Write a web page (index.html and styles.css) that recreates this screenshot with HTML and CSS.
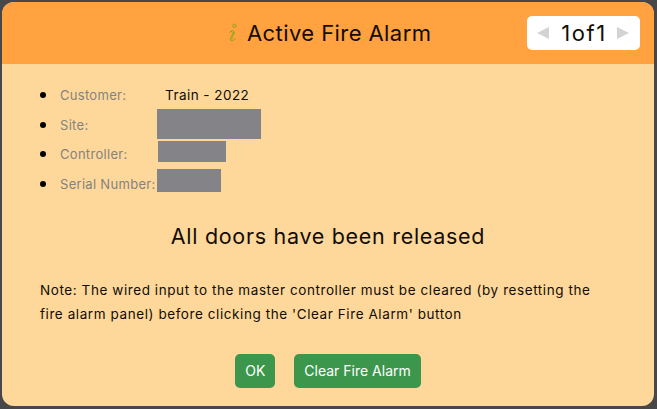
FILE: index.html
```html
<!DOCTYPE html>
<html lang="en">
<head>
  <meta charset="UTF-8">
  <meta name="viewport" content="width=device-width, initial-scale=1.0">
  <title>Active Fire Alarm</title>
  <link rel="stylesheet" href="styles.css">
</head>
<body>
  <div class="modal">
    <div class="modal-header">
      <div class="modal-title">
        <svg class="info-icon" width="12" height="20" viewBox="0 0 12 20" fill="none" stroke="#8fa51f" stroke-width="1">
          <circle cx="7.5" cy="2.8" r="1.7"/>
          <path d="M2.5 9.5 C4 7.5 6.5 7 6.6 8.5 C6.6 10.5 3 14.5 3.2 16.6 C3.4 18.6 6.8 17.6 9 15"/>
          <path d="M3.6 8.6 C5 8.2 5.2 8.6 5 9.8 M7.6 9 C7.4 11 4.6 14.6 4.6 16.4"/>
        </svg>
        <span>Active Fire Alarm</span>
      </div>
      <div class="pager">
        <span class="arrow arrow-left"></span>
        <span class="pager-text">1of1</span>
        <span class="arrow arrow-right"></span>
      </div>
    </div>
    <div class="modal-body">
      <ul class="details">
        <li><span class="label">Customer:</span><span class="value">Train - 2022</span></li>
        <li><span class="label">Site:</span><span class="redacted redacted-site"></span></li>
        <li><span class="label">Controller:</span><span class="redacted redacted-controller"></span></li>
        <li><span class="label">Serial Number:</span><span class="redacted redacted-serial"></span></li>
      </ul>
      <h2 class="status">All doors have been released</h2>
      <p class="note">Note: The wired input to the master controller must be cleared (by resetting the fire alarm panel) before clicking the 'Clear Fire Alarm' button</p>
      <div class="actions">
        <button class="button button-ok">OK</button>
        <button class="button">Clear Fire Alarm</button>
      </div>
    </div>
  </div>
</body>
</html>
```

FILE: styles.css
```css
html, body {
  height: 100%;
}
body {
  margin: 0;
  padding: 2px 3px 3px 2px;
  box-sizing: border-box;
  background-color: #47474a;
  font-family: Inter, "Open Sans", sans-serif;
  color: #120c05;
}
.modal {
  height: 404px;
  display: flex;
  flex-direction: column;
  background-color: #fed89b;
  border-radius: 12px;
  overflow: hidden;
}
.modal-header {
  height: 62px;
  flex: none;
  display: flex;
  align-items: center;
  justify-content: space-between;
  padding: 0 14px 0 225px;
  background-color: #ffa23f;
}
.modal-title {
  display: flex;
  align-items: center;
  gap: 8px;
  font-size: 22px;
  line-height: 28px;
  letter-spacing: 0.42px;
}
.pager {
  width: 113px;
  height: 34px;
  margin-top: -1px;
  display: flex;
  align-items: center;
  justify-content: space-between;
  padding: 0 11px 0 10px;
  box-sizing: border-box;
  background-color: #fff;
  border-radius: 5px;
}
.pager-text {
  margin-left: 2px;
  font-size: 22px;
  letter-spacing: 1.6px;
}
.arrow {
  width: 0;
  height: 0;
  border-top: 6px solid transparent;
  border-bottom: 6px solid transparent;
}
.arrow-left {
  border-right: 12px solid #d3d3d3;
}
.arrow-right {
  border-left: 12px solid #d3d3d3;
}
.modal-body {
  flex: 1;
  padding: 16px 38px 0 38px;
}
.details {
  margin: 0;
  padding: 0;
  list-style: none;
}
.details li {
  height: 29.7px;
  display: flex;
  align-items: center;
}
.details li::before {
  content: "";
  width: 6px;
  height: 6px;
  margin-right: 14px;
  border-radius: 50%;
  background-color: #000;
}
.label {
  width: 97px;
  flex: none;
  color: #85827b;
  font-size: 13px;
  letter-spacing: 0.3px;
}
.value {
  margin-left: 8px;
  font-size: 13.5px;
  letter-spacing: 0.45px;
}
.redacted {
  flex: none;
  background-color: #848488;
}
.redacted-site {
  width: 104px;
  height: 30px;
  margin-bottom: 1px;
}
.redacted-controller {
  width: 68px;
  height: 21px;
  margin: 0 0 5px 1px;
}
.redacted-serial {
  width: 64px;
  height: 23px;
  margin-bottom: 7px;
}
.status {
  margin: 23px 0 0;
  text-align: center;
  font-size: 21.5px;
  line-height: 28px;
  font-weight: 400;
  letter-spacing: 0.7px;
}
.note {
  margin: 28px 20px 0 0;
  font-size: 13.5px;
  line-height: 24px;
  letter-spacing: 0.58px;
}
.actions {
  margin-top: 28px;
  display: flex;
  justify-content: center;
  gap: 19px;
  padding-right: 0;
}
.button {
  height: 34px;
  padding: 0 10px;
  border: none;
  border-radius: 5px;
  background-color: #3c964b;
  color: #fff;
  font-family: inherit;
  font-size: 14px;
}
```
